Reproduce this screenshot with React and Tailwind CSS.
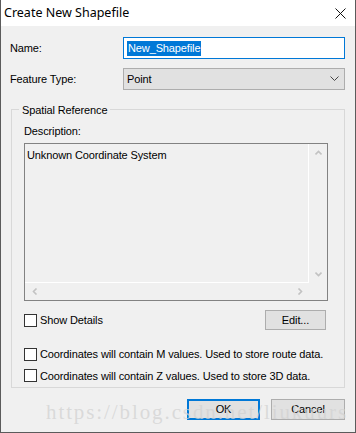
import React from 'react'

const ui = { fontFamily: '"Liberation Sans", Arial, sans-serif' }

const Chevron = ({ dir, className }) => {
  const pts = {
    up: '0.5,4.5 3.5,1.5 6.5,4.5',
    down: '0.5,1.5 3.5,4.5 6.5,1.5',
    left: '4.5,0.5 1.5,3.5 4.5,6.5',
    right: '1.5,0.5 4.5,3.5 1.5,6.5',
  }[dir]
  const wide = dir === 'up' || dir === 'down'
  return (
    <svg width={wide ? 7 : 6} height={wide ? 6 : 7} className={className}>
      <polyline points={pts} fill="none" stroke="#c2c2c2" strokeWidth="1.6" />
    </svg>
  )
}

const Check = ({ label }) => (
  <label className="flex items-center gap-[3px] text-[11px] tracking-[-0.12px] text-black">
    <span className="w-[13px] h-[13px] border border-[#333] bg-white shrink-0" />
    <span>{label}</span>
  </label>
)

export default function App() {
  return (
    <div className="w-[356px] h-[433px] bg-[#f0f0f0] border-x border-b border-[#5b5b5b] flex flex-col relative overflow-hidden" style={ui}>
      {/* title bar */}
      <div className="h-[26px] bg-white flex items-center justify-between pl-[3px] pr-[9px] shrink-0">
        <span className="text-[12.5px] text-black" style={{ fontFamily: '"Noto Sans", sans-serif' }}>Create New Shapefile</span>
        <svg width="11" height="11" viewBox="0 0 11 11">
          <path d="M0.5 0.5 L10.5 10.5 M10.5 0.5 L0.5 10.5" stroke="#111" strokeWidth="1" />
        </svg>
      </div>

      <div className="flex flex-col pl-[9px] pr-[10px] pt-[11px] text-[11px] tracking-[-0.12px]">
        <div className="flex items-center h-[22px]">
          <span className="w-[113px]">Name:</span>
          <div className="flex-1 h-[22px] bg-white border border-[#0078d7] flex items-center pl-[3px]">
            <span className="bg-[#0078d7] text-white leading-[15px] px-[1px]">New_Shapefile</span>
          </div>
        </div>

        <div className="flex items-center h-[22px] mt-[9px]">
          <span className="w-[113px]">Feature Type:</span>
          <div className="flex-1 h-[22px] bg-[#e1e1e1] border border-[#adadad] flex items-center justify-between pl-[3px] pr-[5px]">
            <span>Point</span>
            <svg width="9" height="6">
              <polyline points="0.5,0.5 4.5,4.5 8.5,0.5" fill="none" stroke="#444" strokeWidth="1" />
            </svg>
          </div>
        </div>

        {/* group box */}
        <div className="relative mt-[19px] ml-[1px] border border-[#d8d8d8] h-[279px] px-[12px] pt-[15px]">
          <span className="absolute -top-[8px] left-[7px] px-[3px] bg-[#f0f0f0]">Spatial Reference</span>
          <div className="leading-[13px]">Description:</div>
          <div className="mt-[5px] w-[304px] h-[158px] border border-[#828282] grid grid-cols-[283px_1px_18px] grid-rows-[138px_1px_17px]">
            <div className="pl-[2px] pt-[3px]">Unknown Coordinate System</div>
            <div className="bg-white" />
            <div className="flex flex-col items-center justify-between pt-[6px] pb-[5px]">
              <Chevron dir="up" />
              <Chevron dir="down" />
            </div>
            <div className="bg-white col-span-2" />
            <div />
            <div className="flex items-center justify-between pl-[7px] pr-[5px]">
              <Chevron dir="left" />
              <Chevron dir="right" />
            </div>
            <div />
            <div />
          </div>

          <div className="flex items-center justify-between mt-[9px] pr-[6px]">
            <Check label="Show Details" />
            <div className="w-[61px] h-[20px] bg-[#e1e1e1] border border-[#adadad] flex items-center justify-center">Edit...</div>
          </div>

          <div className="flex flex-col gap-[5px] mt-[16px]">
            <Check label="Coordinates will contain M values. Used to store route data." />
            <Check label="Coordinates will contain Z values. Used to store 3D data." />
          </div>
        </div>

        <div className="flex justify-end gap-[11px] mt-[11px]">
          <div className="w-[73px] h-[21px] bg-[#e1e1e1] border-2 border-[#0078d7] flex items-center justify-center">OK</div>
          <div className="w-[74px] h-[21px] bg-[#e1e1e1] border border-[#adadad] flex items-center justify-center">Cancel</div>
        </div>
      </div>

      <span className="absolute left-[45px] top-[397px] text-[21px] text-[#d2d2d2]/75 tracking-[1.9px] whitespace-nowrap pointer-events-none" style={{ fontFamily: '"Liberation Serif", serif' }}>https://blog.csdn.net/liukuurs</span>
    </div>
  )
}
